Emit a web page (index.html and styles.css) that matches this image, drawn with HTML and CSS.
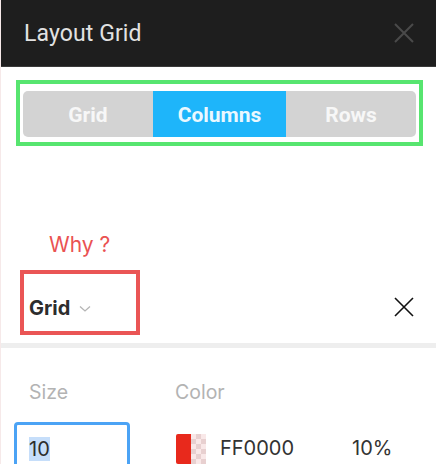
FILE: index.html
```html
<!DOCTYPE html>
<html>
<head>
<meta charset="utf-8">
<link rel="stylesheet" href="styles.css">
</head>
<body>
<div class="page">
  <header class="header">
    <span class="title">Layout Grid</span>
    <svg class="close-dark" width="20" height="20" viewBox="0 0 20 20"><path d="M1 1L19 19M19 1L1 19" stroke="#4a4a4a" stroke-width="2" fill="none"/></svg>
  </header>
  <div class="highlight-green">
    <div class="segmented">
      <div class="seg">Grid</div>
      <div class="seg active">Columns</div>
      <div class="seg">Rows</div>
    </div>
  </div>
  <div class="why">Why ?</div>
  <div class="grid-row">
    <div class="highlight-red">
      <span class="grid-label">Grid</span>
      <svg class="chev" width="12" height="8" viewBox="0 0 12 8"><path d="M1 1.5L6 6L11 1.5" stroke="#b5b5b5" stroke-width="1.3" fill="none"/></svg>
    </div>
    <svg class="close" width="20" height="20" viewBox="0 0 20 20"><path d="M1 1L19 19M19 1L1 19" stroke="#111" stroke-width="1.6" fill="none"/></svg>
  </div>
  <div class="divider"></div>
  <div class="fields">
    <div class="labels">
      <span class="lbl size-lbl">Size</span>
      <span class="lbl">Color</span>
    </div>
    <div class="values">
      <div class="input"><span class="sel">10</span></div>
      <div class="swatch"><span class="red"></span><span class="checker"></span></div>
      <span class="hex">FF0000</span>
      <span class="pct">10%</span>
    </div>
  </div>
</div>
</body>
</html>
```

FILE: styles.css
```css
html, body {
  margin: 0;
  padding: 0;
  background: #ffffff;
}
.page {
  width: 436px;
  height: 464px;
  overflow: hidden;
  font-family: Roboto, "Liberation Sans", sans-serif;
  border-left: 1px solid #f6e9e9;
  box-sizing: border-box;
}
.header {
  height: 67px;
  background: #1e1e1e;
  border-bottom: 1px solid #3a3a3a;
  box-sizing: border-box;
  display: flex;
  align-items: center;
  justify-content: space-between;
  padding: 0 22px 0 23px;
}
.title {
  color: #e2e2e2;
  font-size: 23px;
  letter-spacing: 0.1px;
}
.highlight-green {
  margin: 13px 13px 0 15px;
  height: 66px;
  box-sizing: border-box;
  border: 4px solid #57e56f;
  padding: 7px 3px 5px 3px;
}
.segmented {
  display: flex;
  height: 46px;
  background: #d3d3d3;
  border-radius: 5px;
  overflow: hidden;
}
.seg {
  flex: 1;
  display: flex;
  align-items: center;
  justify-content: center;
  color: #f7f7f7;
  font-size: 21px;
  font-weight: 700;
  padding-top: 2px;
}
.seg.active {
  background: #1eb5fa;
  flex: 0 0 133px;
  color: #eaf8ff;
}
.why {
  margin: 86px 0 0 48px;
  color: #ea5252;
  font-size: 21px;
  line-height: 26px;
  font-family: Inter, Roboto, sans-serif;
}
.grid-row {
  display: flex;
  align-items: center;
  justify-content: space-between;
  margin-top: 12px;
  padding: 0 22px 0 19px;
}
.highlight-red {
  width: 120px;
  height: 65px;
  box-sizing: border-box;
  border: 4px solid #ea5555;
  display: flex;
  align-items: center;
  padding: 10px 0 0 5px;
}
.grid-label {
  font-family: Inter, Roboto, sans-serif;
  font-weight: 700;
  font-size: 20px;
  color: #2d2d2d;
}
.chev {
  margin-left: 9px;
  margin-top: 3px;
}
.close {
  margin-top: 8px;
}
.divider {
  margin-top: 8px;
  height: 5px;
  background: #eeeeee;
}
.fields {
  padding: 32px 0 0 13px;
  font-family: Inter, Roboto, sans-serif;
}
.labels {
  display: flex;
  font-size: 19.5px;
  color: #b3b3b3;
  line-height: 24px;
}
.size-lbl {
  width: 146px;
  padding-left: 15px;
}
.values {
  display: flex;
  align-items: flex-start;
  margin-top: 18px;
}
.input {
  width: 116px;
  height: 50px;
  box-sizing: border-box;
  border: 3px solid #4ba3f5;
  border-radius: 4px;
  padding: 12px 0 0 12px;
}
.sel {
  background: #c6defa;
  color: #2d2d2d;
  font-size: 20px;
  line-height: 24px;
  display: inline-block;
}
.swatch {
  display: flex;
  margin-left: 46px;
  width: 30px;
  height: 30px;
  margin-top: 12px;
}
.red {
  width: 15px;
  background: #e8291c;
  border-radius: 2px 0 0 2px;
}
.checker {
  width: 15px;
  background-color: #f9e8e8;
  background-image:
    linear-gradient(45deg, #e8d0d0 25%, transparent 25%, transparent 75%, #e8d0d0 75%),
    linear-gradient(45deg, #e8d0d0 25%, transparent 25%, transparent 75%, #e8d0d0 75%);
  background-size: 10px 10px;
  background-position: 0 0, 5px 5px;
}
.hex {
  margin-left: 14px;
  font-size: 20px;
  color: #333;
  margin-top: 14px;
}
.pct {
  margin-left: 58px;
  font-size: 20px;
  color: #333;
  margin-top: 14px;
}
```
